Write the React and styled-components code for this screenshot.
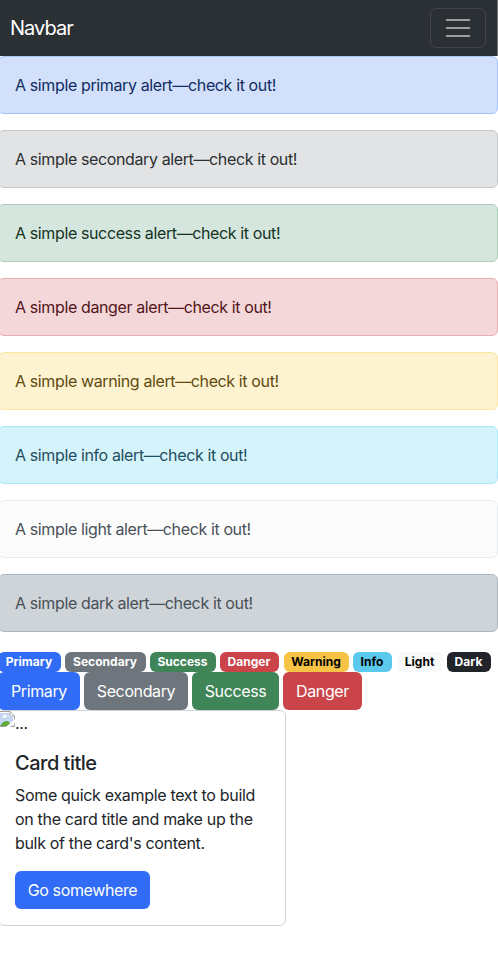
import React from "react";
import styled, { createGlobalStyle } from "styled-components";

const GlobalStyle = createGlobalStyle`
  *, *::before, *::after { box-sizing: border-box; }
  html { overflow: hidden; background: #fff; }
  body {
    margin: 0;
    font-family: Inter, "Liberation Sans", sans-serif;
    font-size: 16px;
    line-height: 24px;
    letter-spacing: -0.34px;
    color: #212529;
    background: #fff;
  }
`;

const Page = styled.main`
  width: 500px;
  margin-left: -2px;
`;

const Navbar = styled.nav`
  display: flex;
  align-items: center;
  justify-content: space-between;
  height: 56px;
  padding: 0 11px 0 12px;
  border-right: 1px solid #75787b;
  background: #2b3035;
`;

const Brand = styled.a`
  color: #fff;
  font-size: 20px;
  line-height: 30px;
  letter-spacing: -0.95px;
`;

const Toggler = styled.button`
  display: flex;
  align-items: center;
  justify-content: center;
  width: 56px;
  height: 40px;
  padding: 0;
  border: 1px solid #41454a;
  border-radius: 6px;
  background: transparent;
`;

const Alert = styled.div`
  height: 58px;
  margin-bottom: 16px;
  padding: 16px;
  border: 1px solid ${(p) => p.$border};
  border-radius: 6px;
  background: ${(p) => p.$bg};
  color: ${(p) => p.$color};
  letter-spacing: -0.38px;
`;

const BadgeRow = styled.div`
  display: flex;
  padding-top: 4px;
`;

const Badge = styled.span`
  width: ${(p) => p.$width}px;
  height: 20px;
  margin-right: ${(p) => p.$gap || 4}px;
  padding-right: 1px;
  border-radius: 6px;
  background: ${(p) => p.$bg};
  color: ${(p) => p.$color || "#fff"};
  font-size: 12px;
  font-weight: 700;
  line-height: 20px;
  letter-spacing: 0.03px;
  text-align: center;
  white-space: nowrap;
`;

const ButtonRow = styled.div`
  display: flex;
  gap: 4px;
`;

const Button = styled.button`
  width: ${(p) => p.$width}px;
  height: 38px;
  padding: 0;
  border: 0;
  border-radius: 6px;
  background: ${(p) => p.$bg};
  color: #fff;
  font: inherit;
  letter-spacing: -0.38px;
  white-space: nowrap;
`;

const Card = styled.article`
  width: 288px;
  height: 216px;
  border: 1px solid #d0d1d2;
  border-radius: 6px;
`;

const CardImage = styled.div`
  display: flex;
  height: 24px;
  svg { flex: none; }
`;

const CardBody = styled.div`
  padding: 16px;
`;

const CardTitle = styled.h5`
  margin: 0 0 8px;
  font-size: 20px;
  font-weight: 500;
  line-height: 24px;
  letter-spacing: -0.5px;
`;

const CardText = styled.p`
  margin: 0 0 16px;
  white-space: nowrap;
  letter-spacing: -0.32px;
`;

const alerts = [
  ["primary", "#d2e0fb", "#a6c4f9", "#102c62"],
  ["secondary", "#e2e3e5", "#c4c8cb", "#2b2f32"],
  ["success", "#d4e6dd", "#abcdba", "#15331f"],
  ["danger", "#f3d7d9", "#e8b0b4", "#521519"],
  ["warning", "#fdf3d1", "#fbe6a2", "#614a0e"],
  ["info", "#d5f3fb", "#abe7f8", "#1e4e5e"],
  ["light", "#fcfcfd", "#e9ecef", "#495057"],
  ["dark", "#ced4d8", "#adb5bd", "#495057"],
];

const badges = [
  ["Primary", 63, "#306cf5"],
  ["Secondary", 81, "#6e757c"],
  ["Success", 66, "#408558"],
  ["Danger", 59, "#ca444a", "#fff", 5],
  ["Warning", 65, "#f6c344", "#000"],
  ["Info", 39, "#5bc8ed", "#000", 5],
  ["Light", 46, "#f8f9fa", "#000"],
  ["Dark", 44, "#212529"],
];

const buttons = [
  ["Primary", 82, "#306cf5"],
  ["Secondary", 104, "#6e757c"],
  ["Success", 87, "#408558"],
  ["Danger", 79, "#ca444a"],
];

const MenuIcon = () => (
  <svg width="30" height="30" viewBox="0 0 30 30" fill="none" aria-hidden="true">
    <path d="M3 7h24M3 15h24M3 23h24" stroke="#9b9da0" strokeWidth="2" />
  </svg>
);

const BrokenImageIcon = () => (
  <svg width="16" height="16" viewBox="0 0 16 16" aria-hidden="true">
    <path d="M0 0h11l5 5v11H0z" fill="#fff" />
    <path d="M1 2h9v4h4v9H1z" fill="#c5d6f5" />
    <path d="M3 6.500Q3 5 4.500 5 5 3 6.500 3.500 8 4 8 6.500z" fill="#fff" />
    <path d="M1 15q3-5 6.500-5 3 0 5 5z" fill="#5faa3c" />
    <path d="M16 8v4l-5 4H7z" fill="#fff" />
    <path d="M.5 16V.5H11L15.500 5v3.500M11 .5V5h4.500M0 15.500h7.500M12 15.500h3.500V12.500" fill="none" stroke="#a3a3a3" />
  </svg>
);

export default function App() {
  return (
    <>
      <GlobalStyle />
      <Page>
        <Navbar>
          <Brand>Navbar</Brand>
          <Toggler aria-label="Toggle navigation"><MenuIcon /></Toggler>
        </Navbar>
        {alerts.map(([name, bg, border, color]) => (
          <Alert key={name} $bg={bg} $border={border} $color={color}>
            A simple {name} alert—check it out!
          </Alert>
        ))}
        <BadgeRow>
          {badges.map(([name, width, bg, color, gap]) => (
            <Badge key={name} $width={width} $bg={bg} $color={color} $gap={gap}>{name}</Badge>
          ))}
        </BadgeRow>
        <ButtonRow>
          {buttons.map(([name, width, bg]) => (
            <Button key={name} $width={width} $bg={bg}>{name}</Button>
          ))}
        </ButtonRow>
        <Card>
          <CardImage><BrokenImageIcon />...</CardImage>
          <CardBody>
            <CardTitle>Card title</CardTitle>
            <CardText>
              Some quick example text to build<br />
              on the card title and make up the<br />
              bulk of the card's content.
            </CardText>
            <Button $width={135} $bg="#306cf5">Go somewhere</Button>
          </CardBody>
        </Card>
      </Page>
    </>
  );
}
